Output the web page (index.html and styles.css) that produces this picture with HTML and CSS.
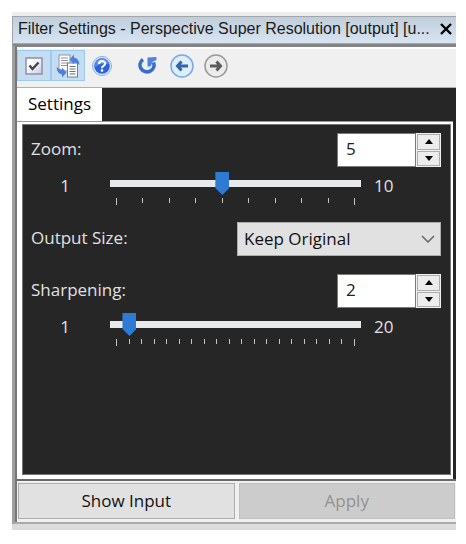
FILE: index.html
```html
<!DOCTYPE html>
<html lang="en">
<head>
    <meta charset="utf-8">
    <title>Filter Settings</title>
    <link rel="stylesheet" href="styles.css">
</head>
<body>
    <div class="window">
        <header class="title-bar">
            <h1>Filter Settings - Perspective Super Resolution [output] [u...</h1>
            <button type="button" class="close-btn" aria-label="Close">
                <svg width="12" height="12" viewBox="0 0 12 12"><path d="M1 1 L11 11 M11 1 L1 11" stroke="#000" stroke-width="2.4"/></svg>
            </button>
        </header>

        <div class="frame">
            <div class="toolbar">
                <button type="button" class="tool active" aria-label="Enable filter">
                    <svg width="18" height="18" viewBox="0 0 18 18">
                        <defs>
                            <linearGradient id="box" x1="0" y1="0" x2="1" y2="1">
                                <stop offset="0.3" stop-color="#fff"/>
                                <stop offset="1" stop-color="#c9c6ea"/>
                            </linearGradient>
                        </defs>
                        <rect x="1" y="1" width="16" height="16" fill="url(#box)" stroke="#8d93a5" stroke-width="1.5"/>
                        <path d="M4.5 8.5 L7.5 12 L13.5 5.5" fill="none" stroke="#454545" stroke-width="2.4"/>
                    </svg>
                </button>
                <button type="button" class="tool active" aria-label="Auto update">
                    <svg width="24" height="24" viewBox="0 0 24 24">
                        <rect x="3" y="1" width="11" height="16" fill="#fff" stroke="#8a93aa"/>
                        <path d="M5 4h7M5 6.500h7M5 9h7M5 11.500h7" stroke="#9194a2"/>
                        <rect x="11.500" y="9" width="10" height="14" fill="#fff" stroke="#6d7da5"/>
                        <path d="M13.500 12.500h6M13.500 15h6M13.500 17.500h6M13.500 20h6" stroke="#6a6e80"/>
                        <path d="M13.500 5.500 L18 0.500 V3.500 Q23 4 23.500 11 Q21 8.500 18 8.500 V10.500 Z" fill="#4c82dc"/>
                        <path d="M10.500 18.500 L6 23.500 V20.500 Q1 20 0.500 13 Q3 15.500 6 15.500 V13.500 Z" fill="#4c82dc"/>
                    </svg>
                </button>
                <button type="button" class="tool" aria-label="Help">
                    <svg width="22" height="22" viewBox="0 0 22 22">
                        <circle cx="11" cy="11" r="9.5" fill="#dce8fb" stroke="#8aaeea"/>
                        <circle cx="11" cy="11" r="7.8" fill="#2c62d6"/>
                        <path d="M4 9 Q6 3.500 11 3.500 Q16 3.500 18 9 Q11 7 4 12 Z" fill="#5b8cec"/>
                        <path d="M8 9 Q8 6.2 11 6.2 Q14.200 6.2 14.200 8.6 Q14.200 10 12.5 10.9 Q11 11.7 11 13.2" fill="none" stroke="#fff" stroke-width="2.2"/>
                        <rect x="9.8" y="14.300" width="2.4" height="2.4" fill="#fff"/>
                    </svg>
                </button>
                <span class="tool-gap"></span>
                <button type="button" class="tool" aria-label="Reset">
                    <svg width="20" height="20" viewBox="0 0 20 20">
                        <path d="M5 3.500 A7 6.800 0 1 0 15.500 6.500" fill="none" stroke="#3b6bd0" stroke-width="3.600"/>
                        <path d="M9.500 1.500 L18.500 1 V4 L15 5.500 L12.500 10.500 H9.500 Z" fill="#5182de"/>
                    </svg>
                </button>
                <button type="button" class="tool" aria-label="Back">
                    <svg width="24" height="24" viewBox="0 0 24 24">
                        <circle cx="12" cy="12" r="11" fill="#deeeff" stroke="#78a8e2" stroke-width="1.5"/>
                        <path d="M11.500 7.500 L7.500 12 L11.500 16.500 M8 12 H18" fill="none" stroke="#2e66a6" stroke-width="3"/>
                    </svg>
                </button>
                <button type="button" class="tool" aria-label="Forward">
                    <svg width="24" height="24" viewBox="0 0 24 24">
                        <circle cx="12" cy="12" r="11" fill="#ececec" stroke="#9a9a9a" stroke-width="1.5"/>
                        <path d="M12.500 7.500 L16.500 12 L12.500 16.500 M16 12 H6" fill="none" stroke="#5c5c5c" stroke-width="3"/>
                    </svg>
                </button>
            </div>

            <nav class="tabs">
                <button type="button" class="tab">Settings</button>
            </nav>

            <form class="page">
                <div class="panel">
                    <div class="row">
                        <label for="zoom">Zoom:</label>
                        <div class="spinner">
                            <input type="text" id="zoom" value="5">
                            <div class="spin-btns">
                                <button type="button" class="up" aria-label="Increase zoom"></button>
                                <button type="button" class="down" aria-label="Decrease zoom"></button>
                            </div>
                        </div>
                    </div>
                    <div class="slider">
                        <span class="min">1</span>
                        <div class="track">
                            <input type="range" min="1" max="10" value="5" aria-label="Zoom">
                            <div class="ticks">
                                <i></i><i></i><i></i><i></i><i></i><i></i><i></i><i></i><i></i><i></i>
                            </div>
                        </div>
                        <span class="max">10</span>
                    </div>

                    <div class="row">
                        <label for="outputSize">Output Size:</label>
                        <div class="select">
                            <select id="outputSize">
                                <option>Keep Original</option>
                            </select>
                            <svg width="14" height="8" viewBox="0 0 14 8"><path d="M1 1 L7 7 L13 1" fill="none" stroke="#666" stroke-width="1.5"/></svg>
                        </div>
                    </div>

                    <div class="row">
                        <label for="sharpening">Sharpening:</label>
                        <div class="spinner">
                            <input type="text" id="sharpening" value="2">
                            <div class="spin-btns">
                                <button type="button" class="up" aria-label="Increase sharpening"></button>
                                <button type="button" class="down" aria-label="Decrease sharpening"></button>
                            </div>
                        </div>
                    </div>
                    <div class="slider">
                        <span class="min">1</span>
                        <div class="track">
                            <input type="range" min="1" max="20" value="2" aria-label="Sharpening">
                            <div class="ticks">
                                <i></i><i></i><i></i><i></i><i></i><i></i><i></i><i></i><i></i><i></i>
                                <i></i><i></i><i></i><i></i><i></i><i></i><i></i><i></i><i></i><i></i>
                            </div>
                        </div>
                        <span class="max">20</span>
                    </div>
                </div>
            </form>

            <footer class="actions">
                <button type="button">Show Input</button>
                <button type="button" disabled>Apply</button>
            </footer>
        </div>
    </div>
</body>
</html>
```

FILE: styles.css
```css
* {
    box-sizing: border-box;
}

body {
    margin: 0;
    padding: 12px 10px 14px 12px;
    min-height: 100vh;
    display: flex;
    background-color: #fff;
    font-family: "Open Sans", "Segoe UI", sans-serif;
    font-size: 17px;
    line-height: 24px;
}

button,
input,
select {
    font: inherit;
    margin: 0;
    padding: 0;
}

.window {
    flex: 1;
    display: flex;
    flex-direction: column;
    border-top: 4px solid #ededed;
    border-bottom: 6px solid #dcdcdc;
}

.title-bar {
    display: flex;
    align-items: center;
    justify-content: space-between;
    height: 28px;
    padding: 0 4px 2px 5px;
    border: 1px solid #a2a6aa;
    border-right: none;
    background: linear-gradient(#c0cddb, #d8e4f1);
}

    .title-bar h1 {
        margin: 0;
        color: #1a1a1a;
        font-family: "Liberation Sans", Arial, sans-serif;
        font-size: 16px;
        font-weight: normal;
        line-height: 20px;
        white-space: nowrap;
    }

.close-btn {
    display: flex;
    border: none;
    background: none;
}

.frame {
    flex: 1;
    display: flex;
    flex-direction: column;
    border-top: 3px solid #858585;
    border-left: 3px solid #a0a0a0;
    border-bottom: 2px solid #aaa;
    box-shadow: inset 2px 0 #777;
    padding-left: 2px;
}

.toolbar {
    display: flex;
    align-items: center;
    height: 41px;
    padding-bottom: 5px;
    border-top: 2px solid #fff;
    border-bottom: 1px solid #b0b0b0;
    background-color: #f0f0f0;
}

.tool {
    display: flex;
    align-items: center;
    justify-content: center;
    width: 34px;
    height: 31px;
    border: 1px solid transparent;
    background: none;
}

    .tool.active {
        border-color: #99cbf5;
        background-color: #c6dcf1;
    }

.tool-gap {
    width: 12px;
}

.tabs {
    display: flex;
    background-color: #262626;
}

.tab {
    width: 85px;
    height: 33px;
    padding-bottom: 2px;
    border: none;
    background-color: #fff;
    color: #000;
}

.page {
    flex: 1;
    display: flex;
    margin-right: 3px;
    padding: 2px 2px 4px 5px;
    border-top: 1px solid #999;
    background-color: #fff;
    box-shadow: 3px 0 #262626;
}

.panel {
    flex: 1;
    padding: 8px 9px 8px 8px;
    border: 1px solid #777;
    background-color: #262626;
    color: #e0e0e0;
}

.row {
    display: flex;
    align-items: center;
    justify-content: space-between;
    height: 34px;
}

    .row label {
        padding-bottom: 2px;
    }

.spinner {
    display: flex;
    width: 104px;
    height: 34px;
}

    .spinner input {
        width: 79px;
        padding: 0 8px 2px;
        border: 1px solid #7a7a7a;
        background-color: #fff;
        color: #222;
    }

.spin-btns {
    flex: 1;
    display: flex;
    flex-direction: column;
    gap: 1px;
    padding: 1px;
    background-color: #f0f0f0;
}

    .spin-btns button {
        flex: 1;
        display: flex;
        align-items: center;
        justify-content: center;
        border: 1px solid #adadad;
        background-color: #ececec;
    }

        .spin-btns button::before {
            content: "";
            border: 4px solid transparent;
        }

        .spin-btns .up::before {
            border-top: none;
            border-bottom: 5px solid #000;
        }

        .spin-btns .down::before {
            border-bottom: none;
            border-top: 5px solid #000;
        }

.slider {
    display: flex;
    height: 55px;
    padding-top: 5px;
}

    .slider .min {
        width: 68px;
        margin-right: 11px;
        text-align: center;
    }

    .slider .max {
        width: 80px;
        padding-left: 13px;
    }

    .slider .min,
    .slider .max {
        padding-top: 2px;
    }

.track {
    flex: 1;
}

    .track input {
        appearance: none;
        display: block;
        width: 100%;
        height: 23px;
        background: linear-gradient(#e7eaea, #e7eaea) center / 100% 7px no-repeat;
    }

        .track input::-webkit-slider-thumb {
            appearance: none;
            width: 14px;
            height: 23px;
            background-color: #2d7bd3;
            clip-path: polygon(0 0, 100% 0, 100% 70%, 50% 100%, 0 70%);
        }

.ticks {
    display: flex;
    justify-content: space-between;
    padding: 3px 6px 0;
}

    .ticks i {
        width: 1px;
        height: 5px;
        background-color: #c4c4c4;
    }

        .ticks i:first-child,
        .ticks i:last-child {
            height: 7px;
        }

.select {
    position: relative;
    width: 204px;
    height: 34px;
}

    .select select {
        appearance: none;
        width: 100%;
        height: 100%;
        padding: 0 6px;
        border: 1px solid #adadad;
        border-radius: 0;
        background-color: #e1e1e1;
        color: #111;
    }

    .select svg {
        position: absolute;
        right: 6px;
        top: 13px;
        pointer-events: none;
    }

.slider + .row + .row {
    margin-top: 18px;
}

.actions {
    display: flex;
    gap: 4px;
    padding: 2px 1px 3px;
    border-top: 2px solid #6a6a6a;
    background-color: #f0f0f0;
}

    .actions button {
        flex: 1;
        height: 36px;
        border: 1px solid #adadad;
        background-color: #e1e1e1;
        color: #111;
    }

        .actions button:disabled {
            border-color: #bfbfbf;
            background-color: #ccc;
            color: #929292;
        }
```
